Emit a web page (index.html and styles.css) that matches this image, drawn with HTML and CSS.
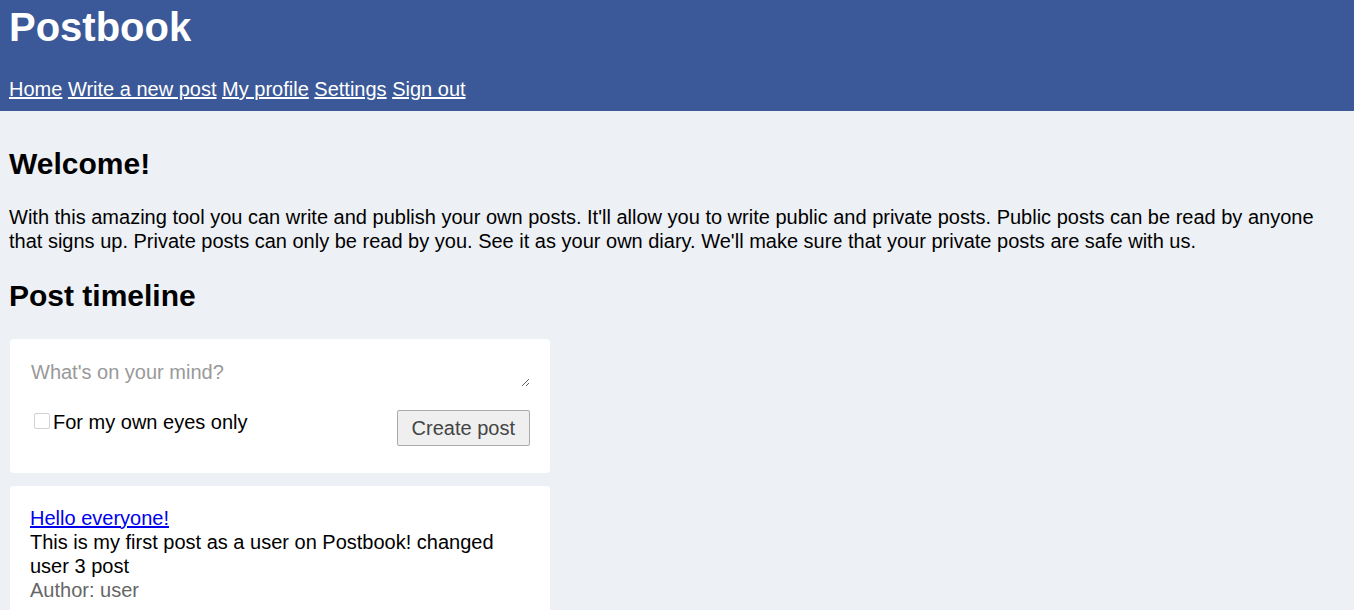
FILE: index.html
```html
<!DOCTYPE html>
<html>
<head>
<meta charset="utf-8">
<title>Postbook</title>
<link rel="stylesheet" href="styles.css">
</head>
<body>
<header class="topbar">
  <h1 class="brand">Postbook</h1>
  <nav class="nav">
    <a href="#">Home</a>
    <a href="#">Write a new post</a>
    <a href="#">My profile</a>
    <a href="#">Settings</a>
    <a href="#">Sign out</a>
  </nav>
</header>
<main class="content">
  <h2 class="heading">Welcome!</h2>
  <p class="intro">With this amazing tool you can write and publish your own posts. It'll allow you to write public and private posts. Public posts can be read by anyone that signs up. Private posts can only be read by you. See it as your own diary. We'll make sure that your private posts are safe with us.</p>
  <h2 class="heading">Post timeline</h2>
  <div class="timeline">
    <form class="card composer">
      <textarea class="composer-input" placeholder="What's on your mind?"></textarea>
      <div class="composer-row">
        <label class="private"><input type="checkbox" class="private-box">For my own eyes only</label>
        <button type="button" class="create-btn">Create post</button>
      </div>
    </form>
    <article class="card post">
      <a href="#" class="post-title">Hello everyone!</a>
      <div class="post-body">This is my first post as a user on Postbook! changed user 3 post</div>
      <div class="post-author">Author: user</div>
    </article>
  </div>
</main>
</body>
</html>
```

FILE: styles.css
```css
html, body {
  margin: 0;
  padding: 0;
}
body {
  background: #edf0f5;
  font-family: "Liberation Sans", Arial, sans-serif;
  font-size: 20px;
  line-height: 24px;
  color: #000;
}
.topbar {
  background: #3b5998;
  color: #fff;
  padding: 2px 9px 10px 9px;
}
.brand {
  margin: 0;
  font-size: 40px;
  line-height: 50px;
  font-weight: bold;
}
.nav {
  margin-top: 25px;
}
.nav a {
  color: #fff;
  text-decoration: underline;
}
.content {
  padding: 11px 9px 10px 9px;
}
.heading {
  font-size: 30px;
  line-height: 36px;
  font-weight: bold;
  margin: 24px 0 23px 0;
}
.intro {
  margin: 20px 0 25px 0;
}
.timeline {
  width: 540px;
  margin: 25px 0 0 1px;
  display: flex;
  flex-direction: column;
  gap: 13px;
}
.card {
  background: #fff;
  border-radius: 4px;
  padding: 20px;
}
.composer {
  margin: 0;
  padding-bottom: 27px;
}
.composer-input {
  display: block;
  width: 500px;
  height: 28px;
  box-sizing: border-box;
  border: none;
  outline: none;
  padding: 1px 1px;
  margin: 0;
  font-family: "Liberation Sans", Arial, sans-serif;
  font-size: 20px;
  line-height: 24px;
  color: #000;
  background: #fff;
}
.composer-input::placeholder {
  color: #999;
}
.composer-row {
  display: flex;
  justify-content: space-between;
  align-items: flex-start;
  margin-top: 23px;
}
.private {
  display: flex;
  align-items: flex-start;
}
.private-box {
  appearance: none;
  -webkit-appearance: none;
  box-sizing: border-box;
  width: 16px;
  height: 16px;
  margin: 3px 3px 0 4px;
  border: 1px solid #d3d3d3;
  border-radius: 2px;
  background: #fff;
}
.create-btn {
  font-family: "Liberation Sans", Arial, sans-serif;
  font-size: 20px;
  line-height: 24px;
  color: #444;
  background: #efefef;
  border: 1px solid #aaa;
  border-radius: 2px;
  padding: 5px 14px;
  margin: 0;
}
.post-title {
  color: #00e;
  text-decoration: underline;
}
.post-body {
  color: #000;
}
.post-author {
  color: #666;
}
```
